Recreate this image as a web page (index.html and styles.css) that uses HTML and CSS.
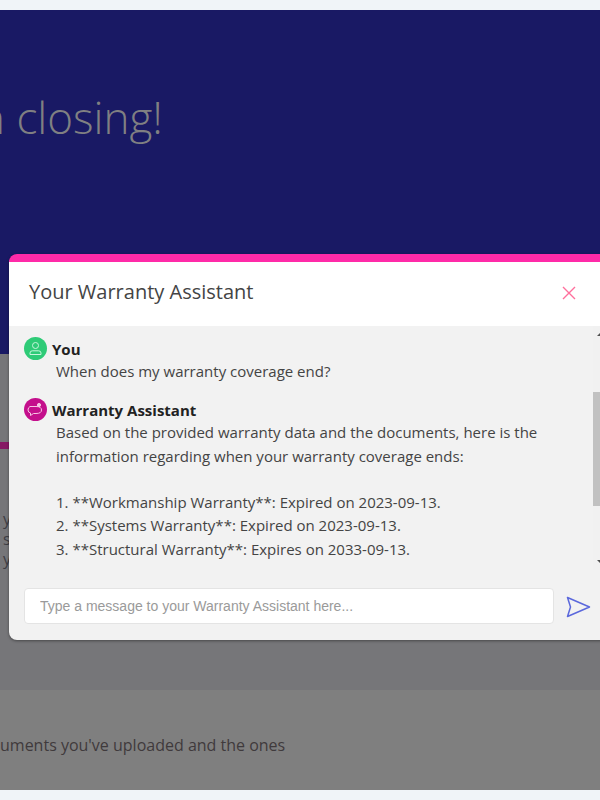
FILE: index.html
```html
<!DOCTYPE html>
<html lang="en">
<head>
    <meta charset="UTF-8">
    <meta name="viewport" content="width=device-width, initial-scale=1.0">
    <title>Your Warranty Assistant</title>
    <link rel="stylesheet" href="styles.css">
</head>
<body>

    <!-- Page behind the dialog -->
    <main class="page">
        <section class="hero">
            <h1>n closing!</h1>
        </section>

        <section class="tasks">
            <div class="tasks-rule"></div>
            <p class="tasks-text">
                <span>y</span>
                <span>s</span>
                <span>y</span>
            </p>
        </section>

        <section class="documents">
            <p>uments you've uploaded and the ones</p>
        </section>
    </main>

    <!-- Chat dialog -->
    <div class="chat-modal">
        <header class="chat-header">
            <h2>Your Warranty Assistant</h2>
            <button class="chat-close" type="button" aria-label="Close">
                <svg width="14" height="14" viewBox="0 0 14 14">
                    <path d="M1 1 L13 13 M13 1 L1 13" fill="none" stroke="#ff6f9c" stroke-width="1.4"/>
                </svg>
            </button>
        </header>

        <div class="chat-body">
            <div class="chat-log">
                <div class="message">
                    <div class="message-author">
                        <span class="avatar avatar-user">
                            <svg width="15" height="15" viewBox="0 0 15 15" fill="none" stroke="#c8f5dc" stroke-width="1">
                                <circle cx="7.5" cy="4.5" r="3"/>
                                <path d="M2 13.5 V12 Q2 9.8 4.5 9.8 H10.5 Q13 9.8 13 12 V13.5 Z"/>
                            </svg>
                        </span>
                        You
                    </div>
                    <div class="message-text">When does my warranty coverage end?</div>
                </div>

                <div class="message">
                    <div class="message-author">
                        <span class="avatar avatar-bot">
                            <svg width="17" height="15" viewBox="0 0 17 15" fill="none" stroke="#f7c5e4" stroke-width="1">
                                <path d="M3 4.5 H9 Q14.5 4.5 14.5 8 Q14.5 11.5 9 11.5 H6.5 L3.5 13.5 V11 Q1 10.5 1 8 Q1 5.5 3 4.5 Z"/>
                                <circle cx="12" cy="3" r="1.6" fill="#f7c5e4"/>
                            </svg>
                        </span>
                        Warranty Assistant
                    </div>
                    <div class="message-text">
                        Based on the provided warranty data and the documents, here is the information regarding when your warranty coverage ends:
                        <br><br>
                        1. **Workmanship Warranty**: Expired on 2023-09-13.<br>
                        2. **Systems Warranty**: Expired on 2023-09-13.<br>
                        3. **Structural Warranty**: Expires on 2033-09-13.
                    </div>
                </div>
            </div>

            <div class="chat-scrollbar">
                <span class="arrow-up"></span>
                <span class="chat-thumb"></span>
                <span class="arrow-down"></span>
            </div>

            <form class="chat-form">
                <input type="text" placeholder="Type a message to your Warranty Assistant here...">
                <button class="chat-send" type="button" aria-label="Send">
                    <svg width="25" height="22" viewBox="0 0 25 22">
                        <path d="M1.5 1.5 L23.5 11 L1.5 20.5 L4.5 11 Z" fill="none" stroke="#5b68dc" stroke-width="1.5" stroke-linejoin="round"/>
                    </svg>
                </button>
            </form>
        </div>
    </div>

</body>
</html>
```

FILE: styles.css
```css
html, body {
    height: 800px;
    overflow: hidden;
}

body {
    font-family: "Open Sans", sans-serif;
    margin: 0;
    padding: 10px 0;
    box-sizing: border-box;
    background-color: #f0f4f8;
    position: relative;
}

.page {
    display: flex;
    flex-direction: column;
    height: 780px;
}

.hero {
    height: 344px;
    flex: none;
    background-color: #191964;
    padding-top: 79px;
    box-sizing: border-box;
}

.hero h1 {
    margin: 0 0 0 -21px;
    font-size: 44px;
    font-weight: 300;
    line-height: 57px;
    color: #808082;
    white-space: nowrap;
}

.tasks {
    height: 336px;
    flex: none;
    background-color: #767679;
    padding-top: 88px;
    box-sizing: border-box;
}

.tasks-rule {
    height: 7px;
    background-color: #861a64;
}

.tasks-text {
    margin: 60px 0 0 3px;
    font-size: 16px;
    line-height: 20px;
    color: #3d3d44;
}

.tasks-text span {
    display: block;
}

.documents {
    flex: 1;
    background-color: #7f7f7f;
    padding-top: 44px;
    box-sizing: border-box;
}

.documents p {
    margin: 0;
    font-size: 16px;
    line-height: 22px;
    color: #3f3a3c;
    white-space: nowrap;
}

/* Dialog */
.chat-modal {
    position: absolute;
    top: 254px;
    left: 9px;
    width: 600px;
    height: 386px;
    display: flex;
    flex-direction: column;
    border-top: 8px solid #ff2aa8;
    border-radius: 8px;
    box-sizing: border-box;
    overflow: hidden;
    background-color: #f2f2f2;
    box-shadow: 0 1px 3px rgba(0, 0, 0, 0.4);
}

.chat-header {
    height: 64px;
    flex: none;
    display: flex;
    justify-content: space-between;
    align-items: center;
    padding: 0 33px 5px 20px;
    box-sizing: border-box;
    background-color: #fff;
}

.chat-header h2 {
    margin: 0;
    font-size: 20px;
    font-weight: 400;
    color: #444;
}

.chat-close {
    display: flex;
    margin-top: 2px;
    padding: 0;
    border: none;
    background: none;
}

.chat-body {
    position: relative;
    flex: 1;
    display: flex;
    flex-direction: column;
    min-height: 0;
}

.chat-log {
    flex: 1;
    min-height: 0;
    overflow: hidden;
    padding: 11px 40px 0 15px;
}

.message {
    margin-bottom: 15px;
}

.message-author {
    display: flex;
    align-items: center;
    gap: 5px;
    height: 23px;
    font-size: 15px;
    font-weight: 700;
    color: #222;
}

.avatar {
    width: 23px;
    height: 23px;
    border-radius: 50%;
    display: flex;
    align-items: center;
    justify-content: center;
}

.avatar-user {
    background-color: #2ecb77;
}

.avatar-bot {
    background-color: #c40f8c;
}

.message-text {
    padding-left: 32px;
    font-size: 15px;
    line-height: 23.25px;
    color: #444;
}

.chat-scrollbar {
    position: absolute;
    top: 0;
    right: 0;
    bottom: 70px;
    width: 16px;
    background-color: #f1f1f1;
}

.chat-thumb {
    position: absolute;
    top: 66px;
    left: 0;
    width: 100%;
    height: 114px;
    background-color: #c1c1c1;
}

.arrow-up, .arrow-down {
    position: absolute;
    left: 4px;
    border-left: 4px solid transparent;
    border-right: 4px solid transparent;
}

.arrow-up {
    top: 6px;
    border-bottom: 4px solid #505050;
}

.arrow-down {
    bottom: 6px;
    border-top: 4px solid #505050;
}

.chat-form {
    flex: none;
    display: flex;
    align-items: center;
    gap: 12px;
    padding: 0 19px 16px 15px;
}

.chat-form input {
    width: 530px;
    height: 36px;
    flex: none;
    box-sizing: border-box;
    padding: 0 15px;
    border: 1px solid #e4e4e4;
    border-radius: 4px;
    background-color: #fff;
    font-family: "Liberation Sans", Arial, sans-serif;
    font-size: 14px;
}

.chat-form input::placeholder {
    color: #9a9a9a;
    opacity: 1;
}

.chat-send {
    display: flex;
    margin-top: 2px;
    padding: 0;
    border: none;
    background: none;
}
```
